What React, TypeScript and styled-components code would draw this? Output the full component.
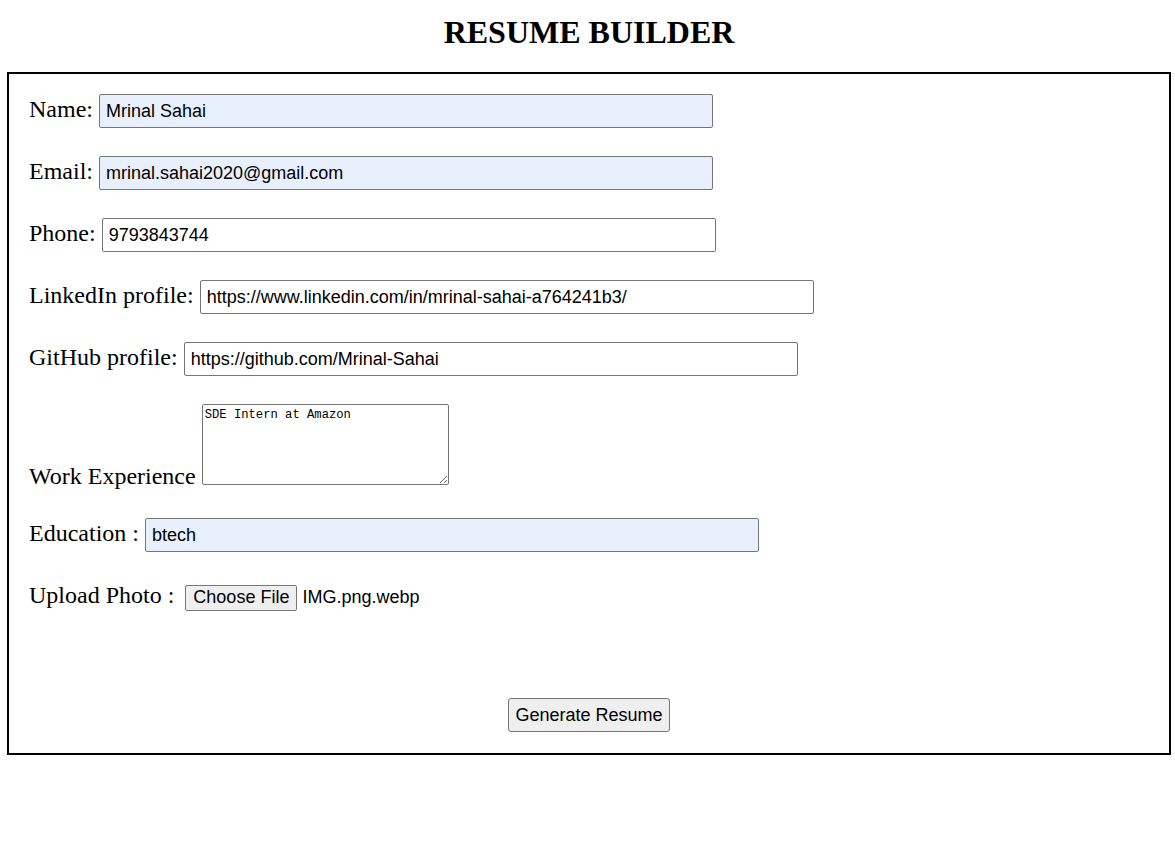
import React, { useState } from "react";
import styled, { createGlobalStyle } from "styled-components";

const GlobalStyle = createGlobalStyle`
    body {
        margin: 0;
        background: #ffffff;
        color: #000000;
        font-family: "Liberation Serif", "Times New Roman", serif;
    }
`;

export default function App() {
    const [formData, setFormData] = useState({
        name: "Mrinal Sahai",
        email: "mrinal.sahai2020@gmail.com",
        phone: "9793843744",
        linkedin: "https://www.linkedin.com/in/mrinal-sahai-a764241b3/",
        github: "https://github.com/Mrinal-Sahai",
        experience: "SDE Intern at Amazon",
        education: "btech",
    });

    const handleChange = (e: React.ChangeEvent<HTMLInputElement | HTMLTextAreaElement>) => {
        const { name, value } = e.target;
        setFormData((prev) => ({ ...prev, [name]: value }));
    };

    return (
        <Page>
            <GlobalStyle />
            <Title>RESUME BUILDER</Title>
            <FormBox onSubmit={(e) => e.preventDefault()}>
                <Row>
                    <Label>Name:</Label>
                    <Input name="name" value={formData.name} onChange={handleChange} $filled />
                </Row>
                <Row>
                    <Label>Email:</Label>
                    <Input name="email" value={formData.email} onChange={handleChange} $filled />
                </Row>
                <Row>
                    <Label>Phone:</Label>
                    <Input name="phone" value={formData.phone} onChange={handleChange} />
                </Row>
                <Row>
                    <Label>LinkedIn profile:</Label>
                    <Input name="linkedin" value={formData.linkedin} onChange={handleChange} />
                </Row>
                <Row>
                    <Label>GitHub profile:</Label>
                    <Input name="github" value={formData.github} onChange={handleChange} />
                </Row>
                <Row $align="flex-end">
                    <Label>Work Experience</Label>
                    <TextArea name="experience" value={formData.experience} onChange={handleChange} />
                </Row>
                <Row>
                    <Label>Education :</Label>
                    <Input name="education" value={formData.education} onChange={handleChange} $filled />
                </Row>
                <Row $top={2}>
                    <Label>Upload Photo :</Label>
                    <FileButton type="button">Choose File</FileButton>
                    <FileName>IMG.png.webp</FileName>
                </Row>
                <Footer>
                    <Button type="submit">Generate Resume</Button>
                </Footer>
            </FormBox>
        </Page>
    );
}

const Page = styled.div`
    padding: 0 4px 100px 7px;
`;

const Title = styled.h1`
    margin: 0;
    padding: 14px 0 22px;
    font-family: "Liberation Serif", "Times New Roman", serif;
    font-size: 32px;
    line-height: 36px;
    font-weight: bold;
    text-align: center;
`;

const FormBox = styled.form`
    border: 2px solid #000000;
    padding: 20px 20px 21px;
    display: flex;
    flex-direction: column;
    gap: 28px;
`;

const Row = styled.div<{ $align?: string; $top?: number }>`
    display: flex;
    align-items: ${(p) => p.$align || "baseline"};
    gap: 6px;
    margin-top: ${(p) => p.$top || 0}px;
`;

const Label = styled.label`
    font-family: "Liberation Serif", "Times New Roman", serif;
    font-size: 24px;
    white-space: nowrap;
`;

const Input = styled.input<{ $filled?: boolean }>`
    box-sizing: border-box;
    width: 614px;
    height: 34px;
    padding: 6px;
    border: 1px solid #767676;
    border-radius: 2px;
    font-family: "Liberation Sans", Arial, sans-serif;
    font-size: 18px;
    color: #000000;
    background: ${(p) => (p.$filled ? "#e8f0fe" : "#ffffff")};
    outline: none;
`;

const TextArea = styled.textarea`
    box-sizing: border-box;
    width: 247px;
    height: 81px;
    margin-bottom: 5px;
    padding: 3px 2px;
    border: 1px solid #767676;
    border-radius: 2px;
    font-family: "Liberation Mono", "Courier New", monospace;
    font-size: 12.2px;
    color: #000000;
    background: #ffffff;
`;

const FileButton = styled.button`
    margin-left: 5px;
    padding: 1px 7px;
    height: 26px;
    border: 1px solid #767676;
    border-radius: 2px;
    background: #efefef;
    font-family: "Liberation Sans", Arial, sans-serif;
    font-size: 18px;
    color: #000000;
`;

const FileName = styled.span`
    margin-left: -1px;
    font-family: "Liberation Sans", Arial, sans-serif;
    font-size: 18px;
`;

const Footer = styled.div`
    display: flex;
    justify-content: center;
    padding-top: 59px;
`;

const Button = styled.button`
    box-sizing: border-box;
    width: 162px;
    height: 34px;
    padding: 6px 0;
    border: 1px solid #767676;
    border-radius: 3px;
    background: #efefef;
    font-family: "Liberation Sans", Arial, sans-serif;
    font-size: 18px;
    color: #000000;
`;
